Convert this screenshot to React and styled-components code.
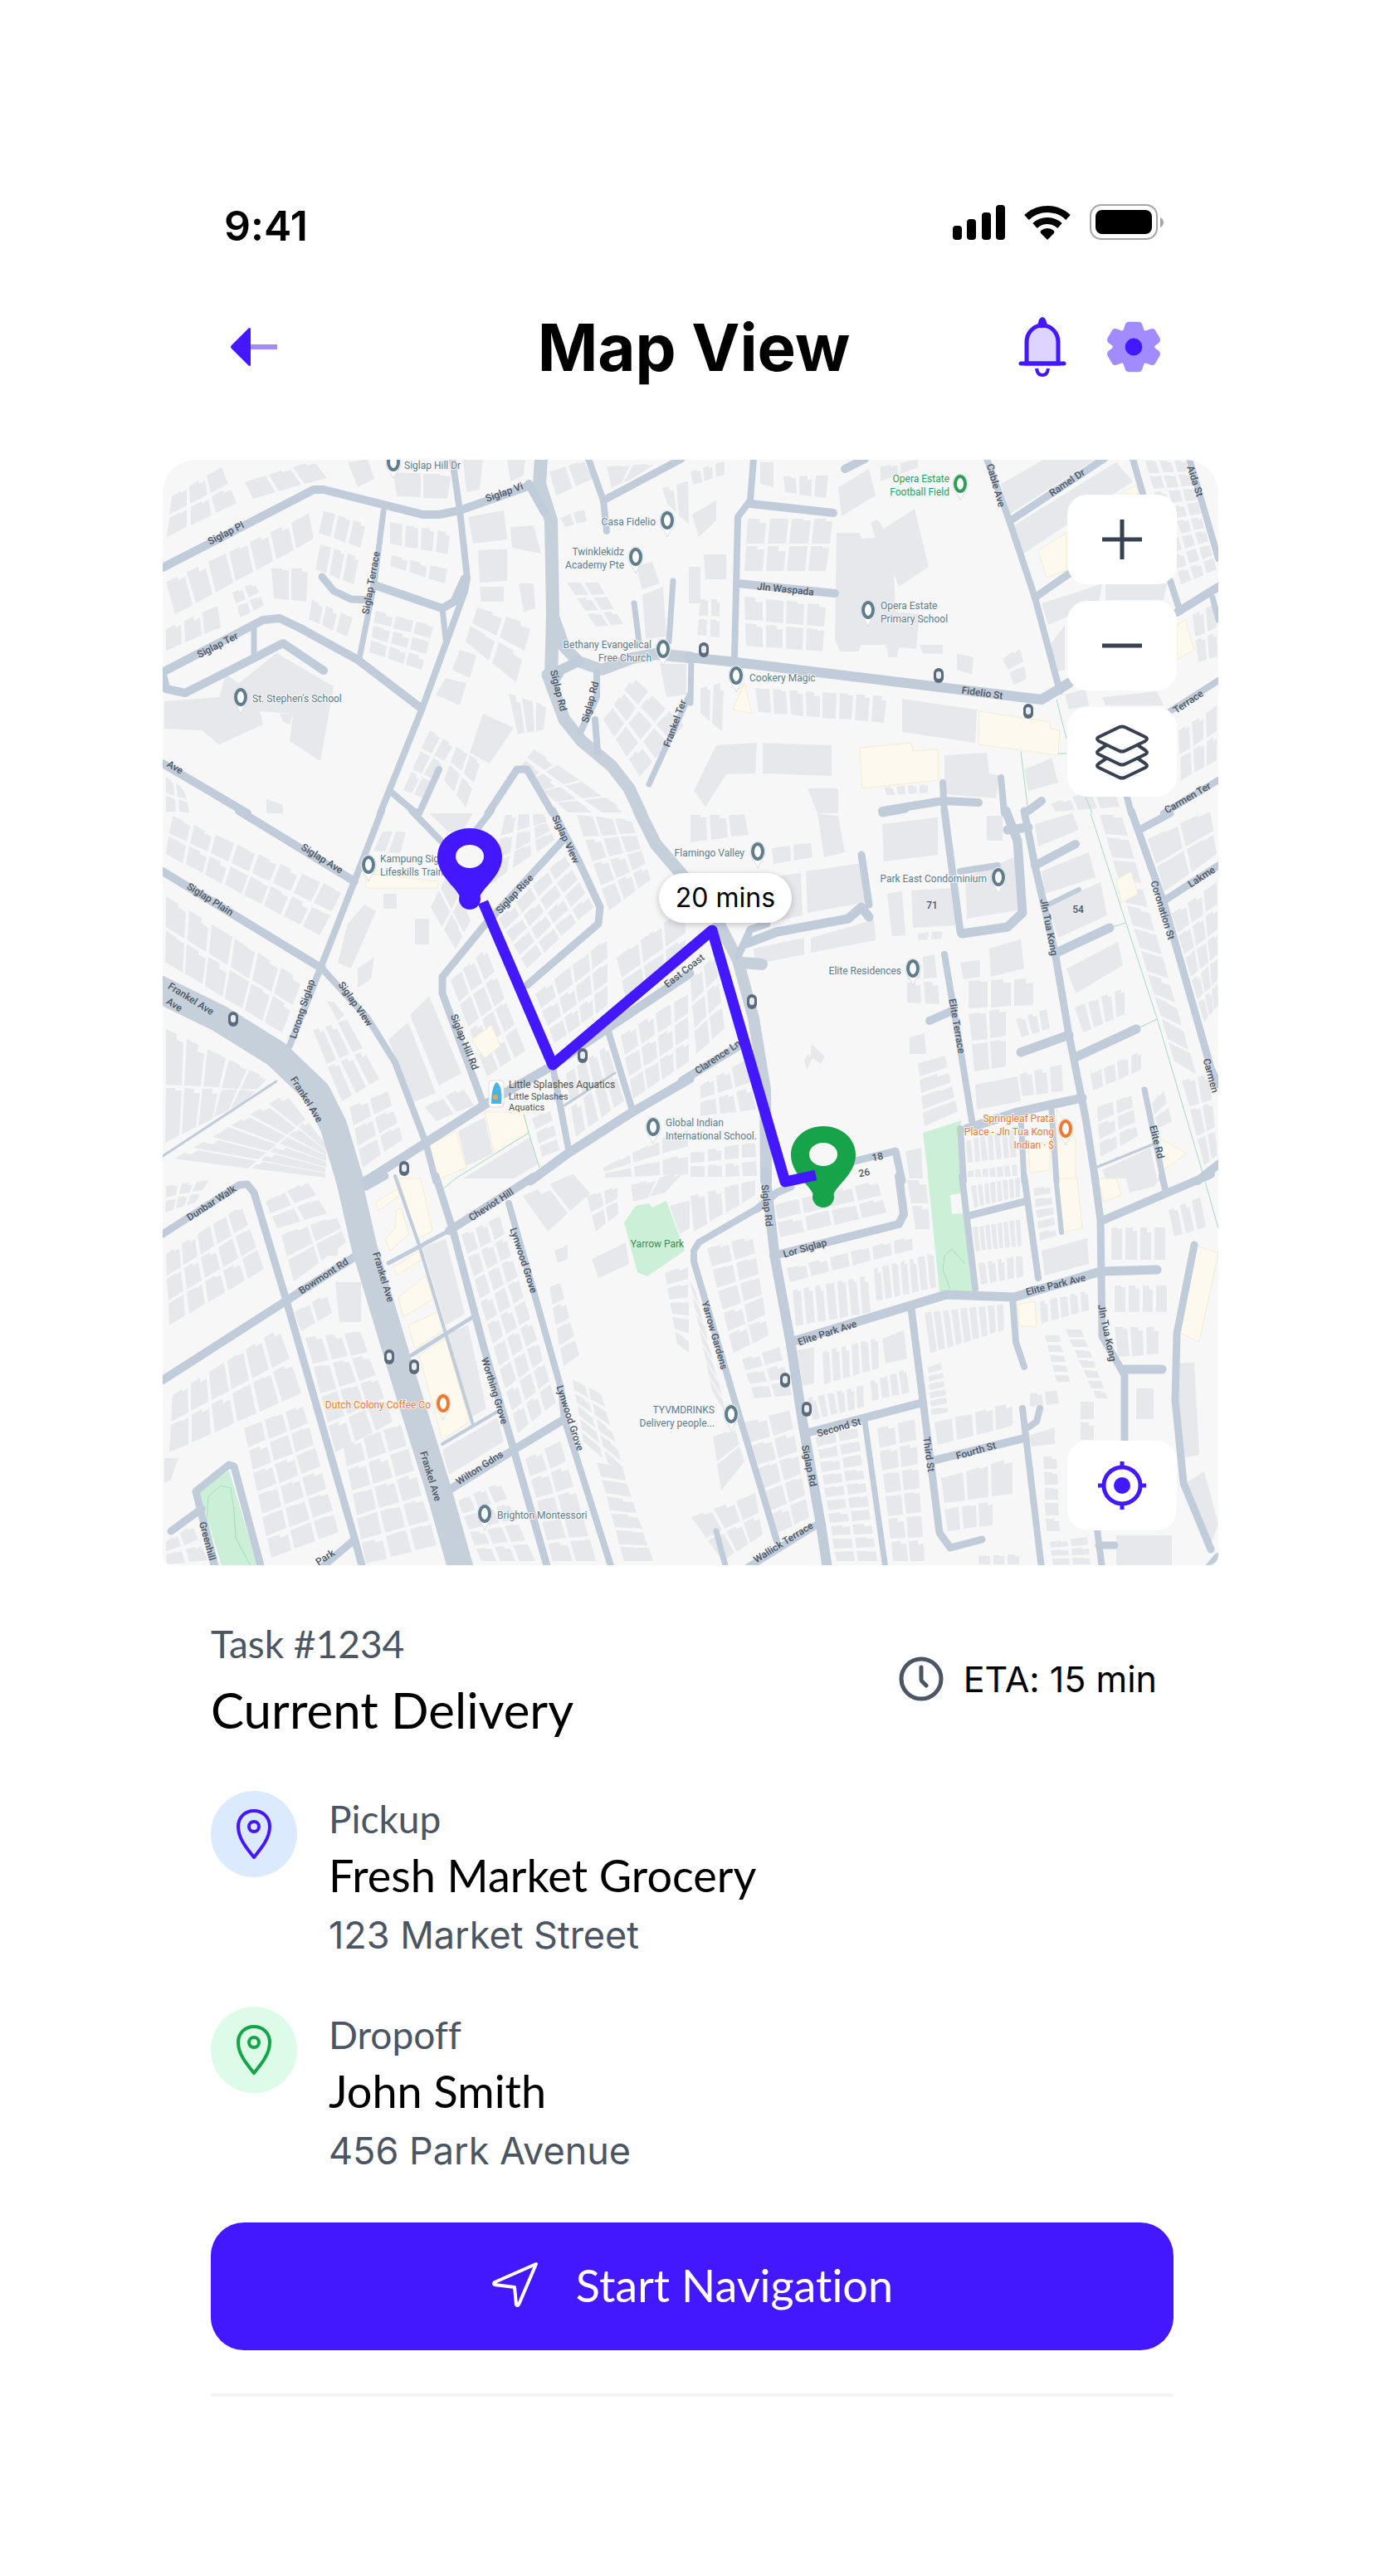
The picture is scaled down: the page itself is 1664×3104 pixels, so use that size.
import React from 'react';
import styled, { createGlobalStyle } from 'styled-components';

const GlobalStyle = createGlobalStyle`
  * {
    box-sizing: border-box;
  }

  body {
    margin: 0;
    background: #ffffff;
    color: #000000;
    font-family: Inter, sans-serif;
    font-variant-ligatures: none;
  }

  h1, h2, p {
    margin: 0;
    font-weight: 400;
  }
`;

const Screen = styled.main`
  width: 100%;
  max-width: 1272px;
  margin: 0 auto;
  padding: 224px 0 216px;
`;

const StatusBar = styled.div`
  display: flex;
  align-items: center;
  justify-content: space-between;
  height: 96px;
  padding: 0 66px 0 74px;
`;

const Time = styled.span`
  font-size: 50px;
  font-weight: 600;
`;

const StatusIcons = styled.div`
  display: flex;
  align-items: center;
  gap: 22px;
  margin-bottom: 8px;
`;

const TopBar = styled.header`
  display: grid;
  grid-template-columns: 1fr auto 1fr;
  align-items: center;
  height: 196px;
  margin-bottom: 38px;
  padding: 0 68px 0 76px;
`;

const Title = styled.h1`
  font-size: 78px;
  font-weight: 700;
`;

const IconButton = styled.button`
  display: flex;
  padding: 0;
  border: 0;
  background: none;
  cursor: pointer;
`;

const Actions = styled.div`
  display: flex;
  align-items: center;
  justify-content: flex-end;
  gap: 44px;
`;

const MapFrame = styled.section`
  position: relative;
  overflow: hidden;
  border-radius: 40px 40px 12px 12px;
  background: #f7f7f7;
`;

const MapCanvas = styled.svg`
  display: block;
  width: 100%;
  height: auto;
  font-family: Roboto, sans-serif;
`;

const Controls = styled.div`
  position: absolute;
  right: 50px;
  top: ${(props) => (props.$bottom ? 'auto' : '42px')};
  bottom: ${(props) => (props.$bottom ? '42px' : 'auto')};
  display: flex;
  flex-direction: column;
  gap: 20px;
`;

const MapButton = styled.button`
  display: flex;
  align-items: center;
  justify-content: center;
  width: 132px;
  height: 108px;
  padding: 0;
  border: 0;
  border-radius: 24px;
  background: #ffffff;
  color: ${(props) => props.$color || '#374151'};
  cursor: pointer;
`;

const TimeBadge = styled.div`
  position: absolute;
  left: 47%;
  top: 37.4%;
  padding: 0 20px;
  border-radius: 30px;
  background: #ffffff;
  box-shadow: 0 2px 8px rgba(0, 0, 0, 0.22);
  font-size: 32px;
  line-height: 60px;
  white-space: nowrap;
`;

const Details = styled.section`
  display: flex;
  flex-direction: column;
  gap: 52px;
  padding: 58px 54px 0 58px;
`;

const TaskRow = styled.div`
  display: flex;
  align-items: center;
  justify-content: space-between;
  margin-bottom: 4px;
  padding-right: 20px;
`;

const TaskNumber = styled.p`
  color: #4b5563;
  font-family: Lato, sans-serif;
  font-size: 46px;
  line-height: 74px;
`;

const TaskTitle = styled.h2`
  font-family: Lato, sans-serif;
  font-size: 60px;
  line-height: 84px;
`;

const Eta = styled.p`
  display: flex;
  align-items: center;
  gap: 24px;
  font-size: 43px;
`;

const Stop = styled.div`
  display: flex;
  gap: 38px;
`;

const StopIcon = styled.div`
  display: flex;
  flex-shrink: 0;
  align-items: center;
  justify-content: center;
  width: 104px;
  height: 104px;
  border-radius: 50%;
  background: ${(props) => props.$background};
`;

const StopText = styled.div`
  padding-top: 4px;
`;

const StopLabel = styled.p`
  color: #4b5563;
  font-family: Lato, sans-serif;
  font-size: 46px;
  line-height: 60px;
`;

const StopName = styled.p`
  font-family: Lato, sans-serif;
  font-size: 54px;
  line-height: 76px;
`;

const StopAddress = styled.p`
  color: #4b5563;
  font-size: 45px;
  line-height: 68px;
`;

const StartButton = styled.button`
  display: flex;
  align-items: center;
  justify-content: center;
  gap: 44px;
  height: 154px;
  padding: 0 0 4px;
  border: 0;
  border-radius: 40px;
  background: #4318ff;
  color: #ffffff;
  font-family: Lato, sans-serif;
  font-size: 54px;
  font-variant-ligatures: none;
  cursor: pointer;
`;

const Divider = styled.hr`
  width: 100%;
  height: 4px;
  margin: 0;
  border: 0;
  border-radius: 4px;
  background: #f3f4f6;
`;

// Map data is stored per tile, in the tile's own units, and projected on the map.
const TILES = [
  {
    origin: [-6, -14],
    roads: [
      [10, '15,432 460,150 490,150 780,240 830,240 890,225 1100,135'],
      [8, '870,40 890,225 912,470 905,520 780,940 655,1320'],
      [7, '665,228 640,490 595,760'],
      [10, '640,495 840,580 875,555 905,470'],
      [7, '840,580 850,690'],
      [9, '485,465 520,515 570,545 625,550'],
      [10, '15,810 310,620 360,615 420,650 590,765 775,940'],
      [10, '15,815 25,870 80,885 285,760 370,705 490,805'],
      [7, '285,650 285,755'],
      [10, '15,1140 265,1320'],
      [8, '690,1245 755,1310 770,1320 830,1160'],
      [9, '975,1320 1060,1160 1090,1160 1165,1320'],
      [16, '1130,40 1125,130 1160,260 1165,600 1160,830'],
      [10, '1095,130 1140,230'],
      [14, '1165,600 1200,720 1240,770 1310,800 1400,760 1470,745 1568,755'],
      [12, '1240,770 1190,800 1165,850'],
      [15, '1150,820 1200,980 1250,1060 1340,1150 1390,1230 1425,1320'],
      [8, '1295,810 1295,900 1245,1030'],
      [8, '1290,980 1298,1100'],
      [8, '1270,40 1315,190 1325,300'],
      [9, '1315,190 1545,40'],
      [7, '1405,560 1420,700'],
      [7, '1520,480 1508,700'],
      [7, '1568,890 1450,1215'],
    ],
    blocks: [
      ['40,170 190,60 240,200 20,330', 3, 2],
      ['250,120 460,40 510,110 280,190', 3, 1],
      ['560,50 620,40 640,110 590,140', 1, 1],
      ['690,80 870,90 860,190 700,180', 2, 1],
      ['900,40 960,40 950,150 910,160', 1, 1],
      ['1030,40 1085,40 1080,100 1040,120', 1, 1],
      ['1150,80 1260,40 1290,110 1170,180', 2, 1],
      ['20,480 450,230 465,330 50,610', 7, 1],
      ['485,220 620,270 600,370 470,310', 3, 1],
      ['475,340 600,390 580,500 460,440', 3, 1],
      ['680,260 870,300 860,390 680,350', 4, 1],
      ['685,380 860,430 850,500 680,430', 3, 1],
      ['915,250 1020,225 1030,330 930,345', 1, 1],
      ['945,370 1030,365 1030,480 950,485', 1, 1],
      ['950,500 1020,500 1020,555 955,555', 1, 1],
      ['1040,285 1110,280 1130,380 1045,360', 1, 1],
      ['1065,490 1110,490 1115,580 1080,590', 1, 1],
      ['330,430 450,430 440,560 340,550', 2, 1],
      ['20,650 180,560 190,650 20,740', 3, 1],
      ['215,520 290,480 320,570 240,620', 2, 2],
      ['450,540 580,610 560,690 440,620', 3, 1],
      ['640,580 820,640 780,810 620,740', 3, 3],
      ['940,570 1110,630 1060,860 900,700', 2, 2],
      ['890,730 940,750 920,830 870,800', 1, 1],
      ['850,830 910,850 890,930 820,890', 1, 1],
      ['1030,880 1150,930 1140,1020 1060,1040', 3, 1],
      ['800,1010 880,1070 780,1270 720,1240', 2, 3],
      ['960,960 1050,1010 980,1140 920,1100', 1, 1],
      ['880,1070 960,1130 910,1310 840,1200', 2, 2],
      ['1110,1080 1400,1320 1200,1320 1060,1160', 4, 2],
      ['1320,60 1480,50 1400,110 1340,150', 2, 1],
      ['1480,140 1568,100 1568,300 1500,200', 2, 1],
      ['1180,250 1260,210 1270,270 1200,290', 2, 1],
      ['1200,480 1300,480 1380,640 1290,650', 2, 3],
      ['1430,530 1490,500 1500,680 1440,690', 1, 1],
      ['1410,430 1460,410 1480,490 1430,510', 1, 1],
      ['1310,980 1400,820 1560,1000 1420,1200', 3, 3],
      ['1480,780 1560,780 1560,890 1500,900', 1, 1],
      ['360,960 400,960 390,1000 370,990', 1, 1],
      ['20,1180 80,1230 100,1320 20,1320', 2, 2],
      ['320,1270 370,1290 370,1320 320,1320', 1, 1],
    ],
    buildings: [
      '20,915 180,900 200,820 240,850 350,740 520,860 480,1130 390,1060 400,960 300,950 310,1000 180,1070 130,1020 20,1015',
    ],
    shops: [],
    parks: [],
    trails: [],
    pois: [
      [695, 50, 'grey', 'start', 728, 76, ['Siglap Hill Dr']],
      [1503, 262, 'grey', 'end', 1468, 280, ['Casa Fidelio']],
      [1410, 392, 'grey', 'end', 1375, 388, ['Twinklekidz', 'Academy Pte']],
      [1492, 725, 'grey', 'end', 1456, 724, ['Bethany Evangelical', 'Free Church']],
      [245, 900, 'grey', 'start', 280, 918, ["St. Stephen's School"]],
    ],
    streets: [
      ['Siglap Pl', 205, 318, -27],
      ['Siglap Vi', 1025, 172, -20],
      ['Siglap Ter', 180, 722, -27],
      ['Siglap Terrace', 640, 490, -80],
      ['Siglap Rd', 1172, 880, 76],
      ['Siglap Rd', 1285, 920, -75],
      ['Frankel Ter', 1535, 1000, -70],
      ['Ave', 46, 1165, 30],
    ],
    stops: [],
  },
  {
    origin: [634, -14],
    roads: [
      [8, '190,40 180,190 145,250 135,760'],
      [10, '180,200 425,235'],
      [10, '145,490 430,525'],
      [12, '0,755 140,775 1040,910 1120,850'],
      [7, '8,760 5,920'],
      [10, '460,75 520,40'],
      [8, '880,40 945,260 1020,540 1095,880'],
      [9, '950,260 1225,40'],
      [8, '1310,40 1340,165'],
      [9, '1020,540 1125,450'],
      [8, '1475,40 1563,400'],
      [8, '1420,480 1450,590'],
      [10, '1440,595 1563,500'],
      [7, '1545,540 1563,620'],
      [8, '1563,840 1420,950'],
      [8, '1400,1320 1563,1200'],
      [10, '570,1310 750,1275 855,1280'],
      [8, '750,1210 755,1320'],
      [8, '920,1190 930,1320'],
      [8, '1290,1250 1305,1320'],
      [10, '1000,1310 1040,1275'],
    ],
    blocks: [
      ['0,80 110,40 110,100 10,140', 3, 1],
      ['10,240 80,190 80,260 30,320', 1, 1],
      ['45,385 110,385 110,475 50,475', 1, 1],
      ['0,430 35,430 35,560 0,560', 1, 1],
      ['30,540 95,540 95,690 20,680', 2, 2],
      ['210,50 250,50 250,140 210,130', 1, 1],
      ['275,95 415,90 410,190 280,165', 3, 1],
      ['560,60 680,40 680,70 560,130', 2, 1],
      ['440,140 530,75 550,170 450,245', 1, 1],
      ['170,250 430,250 410,450 160,450', 4, 2],
      ['160,530 410,560 400,740 165,720', 4, 2],
      ['920,130 1050,40 1200,40 945,240', 1, 1],
      ['960,280 1260,50 1310,120 985,385', 1, 1],
      ['1060,720 1110,640 1110,800 1080,810', 1, 1],
      ['1040,560 1220,490 1210,560 1060,640', 1, 1],
      ['1230,490 1410,490 1400,550 1230,550', 1, 1],
      ['790,745 840,755 835,820 790,800', 1, 1],
      ['680,710 750,710 750,745 690,740', 1, 1],
      ['920,760 980,710 1000,840 960,860', 1, 2],
      ['30,860 110,830 100,1040 30,960', 2, 1],
      ['190,860 590,890 580,1000 200,960', 8, 1],
      ['630,905 850,945 845,1065 628,1025', 1, 1],
      ['218,1065 420,1075 420,1185 218,1175', 1, 1],
      ['1110,890 1170,870 1180,930 1120,945', 1, 1],
      ['1220,900 1380,880 1400,930 1230,930', 1, 1],
      ['1340,40 1470,40 1563,440 1450,500', 3, 8],
      ['1480,600 1563,550 1563,760 1500,780', 2, 2],
      ['1440,1020 1563,920 1563,1130 1450,1210', 3, 2],
      ['990,1160 1070,1120 1090,1210 1000,1240', 1, 1],
      ['1060,1280 1250,1200 1280,1310 1080,1320', 3, 1],
      ['350,1230 440,1230 440,1320 380,1320', 1, 1],
      ['570,1220 710,1210 710,1250 580,1260', 4, 1],
    ],
    buildings: [
      '435,305 505,305 510,328 550,325 535,270 555,258 575,290 665,220 708,430 620,500 605,450 610,590 680,600 670,725 620,720 615,755 590,755 580,710 510,710 500,735 445,735 430,690',
      '80,1075 200,1065 195,1175 110,1180 50,1295 15,1240',
      '755,1110 880,1100 885,1175 915,1185 905,1265 755,1250',
    ],
    shops: [
      '858,950 1065,990 1068,1015 1095,1020 1090,1110 855,1070',
      '505,1082 655,1065 662,1095 735,1090 738,1200 512,1230',
      '1030,370 1115,305 1115,440 1055,468',
      '1270,165 1320,135 1330,165',
      '1440,640 1465,620 1490,730 1440,765',
      '165,850 185,960 130,945',
    ],
    parks: [],
    trails: ['1085,910 1115,1050', '980,1095 1000,1320', '1090,1105 1115,1105', '1170,1260 1190,1320'],
    pois: [
      [801, 130, 'green', 'end', 768, 124, ['Opera Estate', 'Football Field']],
      [529, 585, 'grey', 'start', 565, 582, ['Opera Estate', 'Primary School']],
      [140, 822, 'grey', 'start', 178, 842, ['Cookery Magic']],
    ],
    streets: [
      ['Jln Waspada', 285, 522, 6],
      ['Fidelio St', 865, 897, 8],
      ['Cable Ave', 897, 138, 74],
      ['Aida St', 1484, 124, 72],
      ['Ramel Dr', 1120, 136, -34],
      ['Terrace', 1478, 926, -34],
      ['Carmen Ter', 1476, 1275, -30],
    ],
    stops: [[43, 728], [738, 822], [1000, 952]],
  },
  {
    origin: [-6, 426],
    roads: [
      [10, '240,-10 580,245'],
      [8, '660,-10 580,245 480,560 390,840'],
      [10, '15,210 485,560'],
      [8, '485,560 620,740 700,900 790,1190 820,1330'],
      [33, '-20,620 180,740 350,870 470,1010 520,1130 570,1340'],
      [3, '15,1240 350,970'],
      [8, '750,-10 835,100'],
      [8, '985,-10 940,60'],
      [9, '1195,100 960,410 840,590 840,650 960,1050'],
      [9, '1165,-10 1240,170 1305,340 1300,400 1090,620'],
      [11, '615,1330 790,1190 970,1050 1160,915 1350,760 1568,580'],
      [11, '1100,1330 1210,1230 1400,1080 1568,960'],
      [8, '1165,915 1215,1230'],
      [8, '1330,790 1400,1075'],
      [15, '1420,-10 1470,110 1560,240 1600,320'],
      [3, '1200,1055 1350,940'],
    ],
    blocks: [
      ['40,0 550,280 480,450 20,150', 8, 2],
      ['20,290 430,600 370,800 20,540', 6, 2],
      ['20,770 330,960 260,1040 20,1200', 5, 2],
      ['40,1250 380,1010 500,1200 500,1320 60,1320', 6, 2],
      ['660,60 740,60 720,150 630,140', 2, 1],
      ['800,0 930,0 900,60 860,70', 1, 1],
      ['1020,0 1140,0 1180,90 970,270', 3, 3],
      ['1230,0 1400,20 1460,240 1330,360', 3, 4],
      ['1000,380 1200,140 1290,340 1090,570', 4, 4],
      ['860,200 930,380 880,500 800,340', 2, 2],
      ['760,380 800,380 800,475 760,475', 1, 1],
      ['665,290 705,290 705,345 665,345', 1, 1],
      ['860,600 970,480 1090,860 970,960', 3, 4],
      ['1110,650 1330,440 1330,700 1170,840', 4, 3],
      ['1350,520 1560,330 1560,540 1380,690', 3, 2],
      ['745,730 800,660 895,940 830,985', 1, 1],
      ['680,820 740,755 820,1010 755,1045', 1, 1],
      ['780,1060 900,980 940,1060 820,1120', 2, 1],
      ['450,780 560,740 660,960 540,1050', 3, 2],
      ['560,1060 680,1000 730,1180 600,1290', 2, 3],
      ['590,560 640,520 630,600 590,630', 1, 1],
      ['500,680 520,680 550,730 530,750', 1, 1],
      ['1200,940 1330,830 1380,1040 1230,1180', 4, 2],
      ['1360,800 1568,640 1568,900 1400,1040', 4, 3],
      ['1100,1100 1160,1060 1190,1220 1130,1250', 1, 3],
      ['1310,1280 1568,1110 1568,1320 1320,1320', 3, 2],
      ['900,1320 1100,1170 1120,1270 1050,1320', 1, 1],
      ['885,1150 965,1100 990,1230 910,1275', 1, 1],
    ],
    buildings: ['560,400 610,330 645,355 570,560 530,540'],
    shops: [
      '925,820 985,765 1010,840 965,885',
      '800,1200 880,1150 910,1280 835,1320 820,1320',
      '965,1080 1080,1080 1095,1155 995,1230',
      '615,215 825,245 825,270 615,270',
    ],
    parks: [],
    trails: ['880,1320 1095,1155 1125,1280', '1080,1090 1095,1155'],
    pois: [
      [621, 185, 'grey', 'start', 657, 178, ['Kampung Siglap', 'Lifeskills Training']],
      [1461, 1135, 'grey', 'start', 1497, 1130, ['Global Indian', 'International School.']],
    ],
    streets: [
      ['Siglap Ave', 480, 175, 32],
      ['Siglap Plain', 150, 320, 32],
      ['Siglap View', 1195, 100, 65],
      ['Siglap Rise', 1060, 300, -47],
      ['Siglap View', 575, 695, 55],
      ['Lorong Siglap', 435, 710, -72],
      ['Siglap Hill Rd', 895, 830, 68],
      ['Frankel Ave', 92, 680, 32],
      ['Ave', 44, 702, 32],
      ['Frankel Ave', 430, 1040, 58],
      ['East Coast', 1560, 580, -38],
    ],
    stops: [[222, 745], [1254, 875], [726, 1285]],
  },
  {
    origin: [634, 426],
    roads: [
      [14, '60,330 145,530 190,740 225,1000 228,1330'],
      [9, '145,520 180,420 230,400'],
      [11, '170,470 260,430 470,380 510,340 530,375'],
      [14, '160,540 215,545'],
      [9, '510,150 530,330'],
      [9, '755,-10 800,430'],
      [11, '805,435 940,410 985,360 970,100 935,-10'],
      [9, '990,-10 1020,190 1080,500 1120,800 1170,1100 1200,1330'],
      [11, '940,60 1000,50'],
      [8, '800,210 910,190'],
      [10, '1020,190 1140,110'],
      [11, '1090,500 1240,415'],
      [11, '1145,880 1320,780'],
      [11, '980,865 1120,800'],
      [8, '755,510 800,850 835,1110'],
      [10, '710,750 775,715'],
      [11, '820,1140 970,1080 1160,1030'],
      [8, '800,1140 810,1330'],
      [7, '980,1100 990,1330'],
      [7, '1070,1075 1085,1330'],
      [9, '1305,-10 1400,320 1540,920 1563,980'],
      [9, '1330,60 1420,0'],
      [9, '1395,320 1563,190'],
      [7, '1345,1000 1400,1330'],
      [3, '1200,1280 1380,1190'],
      [10, '-20,965 150,840'],
      [9, '480,1260 610,1220 630,1330'],
      [10, '1500,1330 1563,1270'],
      [9, '570,0 640,-15'],
      [6, '1060,330 1150,275'],
    ],
    blocks: [
      ['0,0 170,0 180,80 0,110', 3, 1],
      ['380,0 440,10 460,140 400,160', 1, 1],
      ['240,120 365,100 370,165 245,190', 2, 1],
      ['570,40 735,15 735,150 575,175', 1, 1],
      ['880,10 925,10 925,100 880,100', 1, 1],
      ['240,230 330,215 335,370 260,390', 1, 1],
      ['345,210 510,180 525,320 350,360', 1, 1],
      ['190,490 340,450 340,510 195,545', 1, 1],
      ['360,450 545,385 550,460 360,505', 1, 1],
      ['585,290 630,280 640,440 600,445', 1, 1],
      ['655,280 785,270 785,405 660,415', 1, 1],
      ['670,430 755,420 750,460 670,465', 2, 1],
      ['815,230 960,160 970,350 820,380', 1, 1],
      ['640,525 730,500 745,700 640,690', 2, 2],
      ['800,540 860,530 860,590 810,600', 1, 1],
      ['885,490 980,455 990,560 890,590', 1, 1],
      ['820,600 1020,590 1020,700 820,710', 3, 1],
      ['820,720 940,700 940,920 840,940', 2, 2],
      ['960,740 1060,700 1070,780 980,820', 3, 1],
      ['1020,40 1130,0 1150,60 1030,120', 1, 1],
      ['1040,210 1180,140 1200,230 1050,290', 1, 1],
      ['1060,330 1215,250 1235,370 1090,450', 1, 1],
      ['1115,560 1265,465 1280,550 1140,650', 1, 1],
      ['1130,700 1290,620 1290,730 1160,800', 4, 1],
      ['1205,0 1280,0 1500,950 1430,900', 1, 11],
      ['1350,90 1540,-20 1563,150 1400,290', 2, 2],
      ['1420,360 1563,240 1563,700 1520,760', 3, 5],
      ['1450,960 1540,940 1563,1240 1520,1280', 2, 3],
      ['650,810 695,795 700,870 650,870', 1, 1],
      ['670,900 760,870 800,1080 690,1140', 1, 4],
      ['845,980 970,950 980,1040 850,1070', 1, 1],
      ['970,940 1105,900 1110,1010 980,1030', 3, 1],
      ['1180,940 1340,850 1340,930 1190,1010', 4, 1],
      ['1200,1060 1310,1010 1330,1170 1210,1250', 2, 3],
      ['1360,1050 1400,980 1430,1120 1380,1150', 1, 2],
      ['1220,1290 1360,1210 1380,1320 1230,1320', 1, 1],
      ['0,600 80,500 110,780 20,880', 2, 3],
      ['30,980 170,880 205,1080 30,1100', 3, 2],
      ['0,1220 200,1180 205,1320 0,1320', 4, 2],
      ['815,1180 960,1130 970,1250 820,1270', 7, 1],
      ['820,1290 970,1260 975,1320 820,1320', 7, 1],
      ['640,1220 685,1210 690,1320 650,1320', 1, 1],
    ],
    buildings: ['340,890 352,870 358,885 362,835 402,880 390,905 365,885 348,928'],
    shops: [
      '1260,240 1305,210 1325,290 1275,325',
      '1000,1190 1065,1190 1065,1290 1005,1300',
      '1085,1070 1140,1180 1140,1330 1090,1330',
      '1390,1175 1470,1230 1400,1290',
    ],
    parks: ['690,1155 805,1110 790,1160 800,1330 708,1330'],
    trails: ['1185,0 1290,400 1380,740 1515,1300', '1240,415 1290,395', '1320,780 1380,745'],
    pois: [
      [202, 138, 'grey', 'end', 165, 155, ['Flamingo Valley']],
      [913, 230, 'grey', 'end', 878, 250, ['Park East Condominium']],
      [661, 560, 'grey', 'end', 626, 582, ['Elite Residences']],
      [1111, 1140, 'orange', 'end', 1078, 1115, ['Springleaf Prata', 'Place - Jln Tua Kong', 'Indian · $']],
    ],
    streets: [
      ['Jln Tua Kong', 1052, 415, 79],
      ['Coronation St', 1388, 355, 73],
      ['Elite Terrace', 782, 770, 80],
      ['Clarence Ln', 90, 890, -34],
      ['Lakme', 1518, 240, -33],
      ['Elite Rd', 1372, 1190, 76],
      ['Carmen', 1530, 950, 75],
      ['71', 718, 345, 0],
      ['54', 1148, 360, 0],
      ['18', 558, 1255, -10],
      ['26', 520, 1310, -10],
    ],
    stops: [[187, 680]],
  },
  {
    origin: [-6, 866],
    roads: [
      [9, '15,200 240,25 265,20 285,50 380,440 580,1300 605,1410'],
      [10, '15,730 590,275'],
      [31, '556,-40 610,250 720,700 830,1130 895,1420'],
      [9, '615,30 670,-10'],
      [4, '700,-10 770,240 850,560 930,890'],
      [5, '680,305 860,190'],
      [10, '860,190 1110,-5'],
      [9, '820,-10 870,180 960,600 1050,980 1150,1410'],
      [5, '750,640 925,505'],
      [4, '840,960 1005,840'],
      [8, '1035,90 1190,760 1200,870 1340,1410'],
      [10, '870,1120 1050,980 1200,870'],
      [9, '170,1410 112,1130 210,1035 225,1040 305,1410'],
      [9, '40,1275 130,1195'],
      [9, '480,1410 575,1310'],
    ],
    blocks: [
      ['20,20 160,0 110,90 20,130', 3, 2],
      ['310,80 440,0 510,130 350,190', 2, 2],
      ['360,200 530,130 560,230 400,380', 2, 2],
      ['20,270 250,90 320,330 30,540', 5, 3],
      ['400,480 500,410 520,490 420,560', 2, 1],
      ['525,375 600,375 600,518 535,518', 1, 1],
      ['500,235 530,235 530,280 495,280', 1, 1],
      ['40,780 360,530 430,780 30,1000', 6, 2],
      ['250,900 430,810 540,1280 330,1380', 3, 6],
      ['20,1010 60,1010 40,1090 20,1100', 1, 1],
      ['20,1310 100,1240 160,1390 20,1400', 2, 2],
      ['430,570 600,550 700,880 520,1000', 3, 4],
      ['540,960 720,880 830,1330 610,1400', 3, 5],
      ['890,200 1010,130 1180,810 1060,930', 3, 9],
      ['1150,390 1190,370 1250,640 1190,690', 1, 4],
      ['1070,60 1230,-20 1280,50 1150,200', 2, 1],
      ['1260,60 1360,20 1360,130 1290,200', 2, 2],
      ['1280,290 1380,230 1390,310 1300,360', 1, 1],
      ['1170,260 1210,240 1210,290 1180,305', 1, 1],
      ['1220,720 1310,770 1390,1100 1250,950', 2, 5],
      ['1290,1020 1370,1040 1470,1390 1370,1390', 1, 6],
      ['880,1160 1010,1090 1120,1390 950,1390', 3, 4],
      ['1080,1010 1190,940 1300,1390 1160,1390', 2, 5],
      ['1490,340 1568,300 1568,640 1530,600', 1, 5],
      ['780,250 850,220 905,490 850,530', 1, 1],
      ['855,560 915,530 970,830 925,865', 1, 1],
      ['840,980 1000,865 1020,950 860,1070', 1, 1],
      ['1390,20 1568,-40 1490,60 1400,90', 2, 1],
      ['1510,100 1568,80 1568,180 1540,200', 1, 1],
    ],
    buildings: [],
    shops: [
      '645,85 705,40 715,60 650,118',
      '670,220 700,180 705,110 720,110 742,200 685,260',
      '710,0 775,0 810,190 765,220',
      '695,320 770,265 780,290 705,350',
      '710,430 790,350 812,435 725,500',
      '740,530 830,480 845,550 760,615',
      '770,640 850,580 920,880 840,945',
    ],
    parks: [
      '122,1132 210,1055 295,1410 190,1410',
      '1375,160 1410,100 1450,90 1460,105 1500,80 1555,260 1445,355 1415,340',
    ],
    trails: ['880,0 840,38', '180,1410 145,1230 150,1150 185,1110 215,1120 225,1200 230,1300 275,1400'],
    pois: [
      [842, 812, 'orange', 'end', 806, 832, ['Dutch Colony Coffee Co']],
      [965, 1212, 'grey', 'start', 1000, 1230, ['Brighton Montessori']],
    ],
    streets: [
      ['Dunbar Walk', 165, 100, -33],
      ['Frankel Ave', 655, 360, 73],
      ['Frankel Ave', 795, 1080, 73],
      ['Bowmont Rd', 495, 362, -33],
      ['Cheviot Hill', 990, 105, -33],
      ['Lynwood Grove', 1070, 300, 72],
      ['Lynwood Grove', 1208, 870, 72],
      ['Worthing Grove', 985, 770, 73],
      ['Wilton Gdns', 955, 1055, -33],
      ['Greenhill', 138, 1315, 75],
      ['Park', 500, 1380, -33],
    ],
    stops: [[682, 645], [756, 680]],
  },
  {
    origin: [634, 866],
    roads: [
      [12, '225,-20 255,290 300,600 335,880 390,1250 410,1410'],
      [8, '215,100 30,230 15,260 15,300 130,780 260,1310'],
      [9, '200,110 260,50 300,30'],
      [10, '250,280 620,165 635,130 620,-10'],
      [11, '300,590 760,420 960,430 1215,335 1380,330'],
      [10, '345,920 690,810'],
      [9, '655,470 690,800 740,1280 770,1335 865,1305'],
      [7, '520,880 580,1410'],
      [10, '720,1020 990,940'],
      [8, '985,830 1040,1410'],
      [8, '1000,900 1025,880 1035,830'],
      [8, '955,430 965,590 990,680'],
      [8, '805,-10 845,400'],
      [9, '825,135 990,85'],
      [8, '990,-10 1030,360'],
      [6, '1083,-10 1100,195'],
      [9, '1198,-10 1215,150 1220,570 1285,710 1285,960'],
      [8, '1205,1270 1218,1410'],
      [11, '1285,690 1395,690'],
      [10, '1225,150 1540,-15'],
      [8, '1395,-10 1405,40'],
      [9, '1490,240 1440,560 1435,800 1460,1100 1540,1340'],
      [12, '1535,1410 1563,1370'],
      [7, '80,1275 110,1410'],
      [9, '170,1410 375,1255'],
      [9, '1210,1325 1255,1325'],
    ],
    blocks: [
      ['0,60 200,0 200,60 10,200', 4, 1],
      ['50,250 190,200 240,570 130,640', 2, 5],
      ['0,360 20,400 120,880 60,760', 1, 7],
      ['150,650 270,600 310,790 190,800', 2, 3],
      ['250,90 560,0 590,130 265,220', 4, 2],
      ['640,0 705,0 715,190 665,190', 1, 2],
      ['285,320 660,200 665,260 295,380', 6, 1],
      ['300,400 530,345 540,490 310,540', 7, 1],
      ['540,320 725,265 735,400 550,450', 7, 1],
      ['320,620 370,610 370,740 335,750', 1, 1],
      ['390,620 560,570 565,690 395,750', 6, 1],
      ['570,580 635,550 645,650 580,670', 1, 1],
      ['345,790 520,740 520,830 365,880', 6, 1],
      ['530,730 645,680 655,780 535,810', 4, 1],
      ['370,930 500,890 560,1390 430,1390', 2, 10],
      ['550,900 670,860 700,1390 600,1390', 2, 6],
      ['160,880 300,830 360,1230 260,1290', 2, 5],
      ['65,930 140,900 170,1020 90,1140', 1, 2],
      ['0,1220 200,1130 220,1290 100,1390', 3, 2],
      ['690,480 930,450 935,550 710,640', 9, 1],
      ['700,680 750,660 770,850 710,860', 1, 6],
      ['720,880 960,800 960,900 730,970', 4, 1],
      ['740,1080 960,1000 960,1150 750,1180', 3, 1],
      ['750,1190 900,1160 900,1260 760,1280', 3, 1],
      ['1000,770 1090,760 1100,820 1000,830', 2, 1],
      ['1000,930 1080,900 1080,960 1010,970', 1, 1],
      ['830,20 980,-10 980,70 840,110', 8, 1],
      ['835,170 980,140 985,250 845,270', 8, 1],
      ['850,300 990,270 990,360 860,390', 5, 1],
      ['1010,30 1070,20 1090,210 1030,230', 1, 5],
      ['1040,260 1175,215 1180,310 1050,350', 1, 1],
      ['1030,440 1180,400 1185,480 1035,530', 5, 1],
      ['1045,560 1095,560 1130,740 1080,740', 1, 5],
      ['1105,540 1160,540 1240,800 1200,800', 1, 7],
      ['1240,170 1410,170 1410,300 1240,300', 4, 1],
      ['1250,380 1415,380 1415,490 1250,490', 4, 1],
      ['1250,530 1390,530 1390,640 1260,650', 3, 1],
      ['1410,110 1510,60 1530,180 1430,220', 3, 1],
      ['1320,760 1370,760 1370,870 1320,870', 1, 1],
      ['1150,800 1200,800 1200,950 1150,950', 1, 2],
      ['1440,670 1490,665 1505,1000 1455,1010', 1, 1],
      ['1465,1100 1520,1060 1563,1250 1540,1320', 1, 1],
      ['1260,1290 1425,1290 1425,1400 1260,1400', 1, 1],
      ['1040,1000 1090,1000 1100,1280 1050,1280', 1, 5],
      ['1060,1310 1180,1290 1190,1400 1070,1400', 2, 3],
      ['850,1360 980,1350 980,1400 850,1400', 3, 1],
      ['1290,0 1390,0 1370,30 1300,50', 1, 1],
    ],
    buildings: [],
    shops: [
      '1090,0 1145,0 1160,180 1105,195',
      '1208,0 1260,0 1275,60 1225,85',
      '970,455 1020,445 1025,535 975,535',
      '1490,240 1563,270 1505,590 1435,550',
    ],
    parks: ['705,-10 800,-10 800,55 770,60 775,130 815,125 835,408 740,410'],
    trails: ['1520,0 1563,180', '770,400 750,330 755,280 775,255 815,310'],
    pois: [
      [125, 852, 'grey', 'end', 75, 848, ['TYVMDRINKS', 'Delivery people...']],
    ],
    streets: [
      ['Siglap Rd', 220, 100, 84],
      ['Siglap Rd', 345, 1040, 78],
      ['Lor Siglap', 345, 264, -16],
      ['Yarrow Gardens', 65, 570, 74],
      ['Elite Park Ave', 412, 570, -18],
      ['Elite Park Ave', 1085, 397, -14],
      ['Second St', 445, 912, -16],
      ['Third St', 698, 1000, 82],
      ['Fourth St', 850, 995, -16],
      ['Jln Tua Kong', 1225, 560, 78],
      ['Wallick Terrace', 285, 1325, -32],
    ],
    stops: [[285, 728], [347, 835]],
  },
];

const POI_COLORS = { grey: '#5f7d8c', green: '#2f9e5b', orange: '#ee7a30' };

const project = (origin, x, y) => [
  Math.round(origin[0] + x * 0.4085),
  Math.round(origin[1] + y / 3),
];

const toPoints = (origin, text) =>
  text.split(' ').map((pair) => {
    const [x, y] = pair.split(',').map(Number);
    return project(origin, x, y);
  });

const toAttr = (points) => points.map((p) => p.join(',')).join(' ');

// Splits a city block into plots, leaving a narrow lane around each one.
const splitBlock = (corners, cols, rows) => {
  const [a, b, c, d] = corners;
  const width = Math.hypot(b[0] - a[0], b[1] - a[1]) / cols;
  const height = Math.hypot(d[0] - a[0], d[1] - a[1]) / rows;
  const single = cols * rows === 1;
  const gapU = single ? 0 : Math.min(0.14, 2 / width);
  const gapV = single ? 0 : Math.min(0.14, 2 / height);
  const at = (u, v) =>
    [0, 1].map((k) =>
      Math.round((a[k] * (1 - u) + b[k] * u) * (1 - v) + (d[k] * (1 - u) + c[k] * u) * v)
    );

  const plots = [];
  for (let row = 0; row < rows; row += 1) {
    for (let col = 0; col < cols; col += 1) {
      const notch = single || width < 11 ? 0 : ((row * 7 + col * 5 + a[0]) % 4) * 0.05;
      const u0 = (col + gapU) / cols;
      const u1 = (col + 1 - gapU) / cols;
      const um = (col + 0.6) / cols;
      const v0 = (row + gapV) / rows;
      const v1 = (row + 1 - gapV) / rows;
      const vn = (row + gapV + notch) / rows;
      plots.push([at(u0, v0), at(um, v0), at(um, vn), at(u1, vn), at(u1, v1), at(u0, v1)]);
    }
  }
  return plots;
};

const TileShapes = ({ tile }) => {
  const { origin } = tile;
  return (
    <g>
      <g fill="#e7e8ec">
        {tile.blocks.map(([corners, cols, rows]) =>
          splitBlock(toPoints(origin, corners), cols, rows).map((plot, i) => (
            <polygon key={corners + i} points={toAttr(plot)} />
          ))
        )}
        {tile.buildings.map((shape) => (
          <polygon key={shape} points={toAttr(toPoints(origin, shape))} />
        ))}
      </g>
      <g fill="#fdf9ef" stroke="#f4ecd0">
        {tile.shops.map((shape) => (
          <polygon key={shape} points={toAttr(toPoints(origin, shape))} />
        ))}
      </g>
      <g fill="#ccefd8">
        {tile.parks.map((shape) => (
          <polygon key={shape} points={toAttr(toPoints(origin, shape))} />
        ))}
      </g>
      <g fill="none" stroke="#a5dcc0">
        {tile.trails.map((line) => (
          <polyline key={line} points={toAttr(toPoints(origin, line))} />
        ))}
      </g>
    </g>
  );
};

const TileRoads = ({ tile }) => (
  <g fill="none" strokeLinecap="round" strokeLinejoin="round">
    {tile.roads.map(([width, line]) => (
      <polyline
        key={line}
        points={toAttr(toPoints(tile.origin, line))}
        stroke={width > 12 ? '#c6d0da' : '#c0ccd9'}
        strokeWidth={width}
      />
    ))}
  </g>
);

const TileLabels = ({ tile }) => {
  const { origin } = tile;
  return (
    <g>
      {tile.streets.map(([name, x, y, angle]) => {
        const [px, py] = project(origin, x, y);
        return (
          <text
            key={name + x}
            fill="#4d5766"
            fontSize="12"
            fontWeight="500"
            textAnchor="middle"
            transform={`translate(${px} ${py}) rotate(${angle})`}
          >
            {name}
          </text>
        );
      })}
      {tile.stops.map(([x, y]) => {
        const [px, py] = project(origin, x, y);
        return (
          <g key={x}>
            <rect x={px - 6} y={py - 9} width="12" height="18" rx="6" fill="#5b6b7b" />
            <rect x={px - 3} y={py - 5} width="6" height="9" rx="3" fill="#e9edf1" />
          </g>
        );
      })}
      {tile.pois.map(([x, y, tone, anchor, tx, ty, lines]) => {
        const [px, py] = project(origin, x, y);
        const [lx, ly] = project(origin, tx, ty);
        return (
          <g key={lines[0]}>
            <path
              d={`M${px - 9} ${py}a9 12 0 0 1 18 0c0 8-6 12-9 20c-3-8-9-12-9-20z`}
              fill="#ffffff"
              stroke="#d9dde2"
            />
            <ellipse cx={px} cy={py} rx="6" ry="9" fill="#ffffff" stroke={POI_COLORS[tone]} strokeWidth="4" />
            {lines.map((line, i) => (
              <text
                key={line}
                x={lx}
                y={ly + i * 16}
                fill={POI_COLORS[tone]}
                stroke="#f7f7f7"
                strokeWidth="2"
                paintOrder="stroke"
                fontSize="12"
                textAnchor={anchor}
              >
                {line}
              </text>
            ))}
          </g>
        );
      })}
    </g>
  );
};

const MapPin = ({ x, y, color }) => (
  <g transform={`translate(${x} ${y})`} fill={color}>
    <path
      fillRule="evenodd"
      d="M0-34c22 0 39 15 39 35c0 15-11 27-20 37c-4 5-7 9-9 14h-20c-2-5-5-9-9-14c-9-10-20-22-20-37c0-20 17-35 39-35zM0-14a17 14 0 1 0 0 28a17 14 0 1 0 0-28z"
    />
    <circle cy="51" r="13" />
  </g>
);

const CityMap = () => (
  <MapCanvas viewBox="0 0 1272 1332" role="img" aria-label="Delivery route map">
    {TILES.map((tile) => (
      <TileShapes key={tile.origin.join()} tile={tile} />
    ))}
    {TILES.map((tile) => (
      <TileRoads key={tile.origin.join()} tile={tile} />
    ))}
    {TILES.map((tile) => (
      <TileLabels key={tile.origin.join()} tile={tile} />
    ))}
    <text x="596" y="949" fill="#3c8a5c" fontSize="12" textAnchor="middle">
      Yarrow Park
    </text>
    <g fill="#53504a" fontSize="12">
      <rect x="393" y="748" width="18" height="32" rx="4" fill="#ffffff" stroke="#d9dde2" />
      <path d="M396 776q0-20 6-26q8 4 6 26z" fill="#45b5e8" />
      <circle cx="401" cy="768" r="3" fill="#f5a742" />
      <text x="417" y="757">Little Splashes Aquatics</text>
      <text x="417" y="771" fontSize="11">Little Splashes</text>
      <text x="417" y="784" fontSize="11">Aquatics</text>
    </g>
    <MapPin x={370} y={478} color="#4318ff" />
    <MapPin x={796} y={837} color="#16a34a" />
    <polyline
      points="386,533 470,729 662,567 750,870 787,862"
      fill="none"
      stroke="#4318ff"
      strokeWidth="13"
      strokeLinejoin="round"
    />
  </MapCanvas>
);

const SignalIcon = () => (
  <svg width="65" height="42" viewBox="0 0 65 42" aria-hidden="true">
    <rect x="1" y="25" width="11" height="17" rx="4" />
    <rect x="18" y="17" width="11" height="25" rx="4" />
    <rect x="36" y="9" width="11" height="33" rx="4" />
    <rect x="53" y="0" width="11" height="42" rx="4" />
  </svg>
);

const WifiIcon = () => (
  <svg width="56" height="42" viewBox="0 0 56 42" aria-hidden="true">
    <g fill="none" stroke="#000000" strokeWidth="8">
      <path d="M3 15a36 36 0 0 1 50 0" />
      <path d="M13 25a22 22 0 0 1 30 0" />
    </g>
    <path d="M28 42l-8-8a3 3 0 0 1 0-3a12 12 0 0 1 16 0a3 3 0 0 1 0 3z" />
  </svg>
);

const BatteryIcon = () => (
  <svg width="90" height="44" viewBox="0 0 90 44" aria-hidden="true">
    <rect x="2" y="1" width="80" height="41" rx="13" fill="none" stroke="#a6a6a6" strokeWidth="2" />
    <rect x="8" y="7" width="68" height="29" rx="8" />
    <path d="M86 16q4 2 4 6t-4 6z" fill="#a6a6a6" />
  </svg>
);

const BackIcon = () => (
  <svg width="72" height="60" viewBox="0 0 72 60" aria-hidden="true">
    <path d="M30 30h32" stroke="#a18bff" strokeWidth="6" />
    <path d="M30 8v44q-1 2-3 0l-20-20q-2-2 0-4l20-20q2-2 3 0z" fill="#4318ff" />
  </svg>
);

const BellIcon = () => (
  <svg width="64" height="76" viewBox="0 0 64 76" aria-hidden="true">
    <path d="M13 58v-26a19 20 0 0 1 38 0v26z" fill="#ddd5ff" stroke="#4318ff" strokeWidth="5" />
    <path d="M6 58h52" stroke="#4318ff" strokeWidth="5" strokeLinecap="round" />
    <path d="M25 15l3-10q4-6 8 0l3 10z" fill="#4318ff" />
    <path d="M25 64q1 8 7 8t7-8" fill="none" stroke="#4318ff" strokeWidth="4" />
  </svg>
);

const GEAR_PATH =
  'M30 4h12q4 0 5 4l2 6q1 2 3 1l6-2q3-1 5 1l6 10q2 4-1 7l-4 3q-3 2 0 4l4 3q3 3 1 7l-6 10q-2 2-5 1l-6-2q-2-1-3 1l-2 6q-1 4-5 4h-12q-4 0-5-4l-2-6q-1-2-3-1l-6 2q-3 1-5-1l-6-10q-2-4 1-7l4-3q3-2 0-4l-4-3q-3-3-1-7l6-10q2-2 5-1l6 2q2 1 3-1l2-6q1-4 5-4z';

const GearIcon = () => (
  <svg width="68" height="72" viewBox="0 0 72 72" aria-hidden="true">
    <path d={GEAR_PATH} fill="#a18bff" />
    <circle cx="36" cy="36" r="11" fill="#4318ff" />
  </svg>
);

const PlusIcon = () => (
  <svg width="48" height="48" viewBox="0 0 48 48" stroke="currentColor" strokeWidth="5" aria-hidden="true">
    <path d="M0 24h48M24 0v48" />
  </svg>
);

const MinusIcon = () => (
  <svg width="48" height="48" viewBox="0 0 48 48" stroke="currentColor" strokeWidth="5" aria-hidden="true">
    <path d="M0 24h48" />
  </svg>
);

const LayersIcon = () => (
  <svg
    width="68"
    height="68"
    viewBox="0 0 68 68"
    fill="none"
    stroke="currentColor"
    strokeWidth="4"
    strokeLinejoin="round"
    aria-hidden="true"
  >
    <path d="M31 4q3-1 6 0l25 12q4 2 0 5l-25 12q-3 1-6 0l-25-12q-4-3 0-5z" />
    <path d="M15 26l-9 6q-4 3 0 5l25 12q3 1 6 0l25-12q4-2 0-5l-9-6" />
    <path d="M15 42l-9 6q-4 3 0 5l25 12q3 1 6 0l25-12q4-2 0-5l-9-6" />
  </svg>
);

const LocateIcon = () => (
  <svg width="58" height="58" viewBox="0 0 58 58" fill="none" stroke="currentColor" strokeWidth="5" aria-hidden="true">
    <circle cx="29" cy="29" r="22" />
    <circle cx="29" cy="29" r="10" fill="currentColor" stroke="none" />
    <path d="M29 0v9M29 49v9M0 29h9M49 29h9" />
  </svg>
);

const ClockIcon = () => (
  <svg width="54" height="54" viewBox="0 0 54 54" fill="none" stroke="#4b5563" strokeWidth="5" aria-hidden="true">
    <circle cx="27" cy="27" r="24" />
    <path d="M27 13v14q0 2 1 3l5 5" strokeLinecap="round" />
  </svg>
);

const PlaceIcon = ({ color }) => (
  <svg width="46" height="62" viewBox="0 0 46 62" fill="none" stroke={color} strokeWidth="4" aria-hidden="true">
    <path d="M23 3c11 0 19 8 19 19c0 14-10 26-19 37c-9-11-19-23-19-37c0-11 8-19 19-19z" strokeLinejoin="round" />
    <circle cx="23" cy="22" r="6" />
  </svg>
);

const SendIcon = () => (
  <svg width="58" height="56" viewBox="0 0 58 56" fill="none" stroke="#ffffff" strokeWidth="4" aria-hidden="true">
    <path d="M54 3l-50 22q-2 2 0 3l24 3l2 21q1 2 3 0z" strokeLinejoin="round" />
  </svg>
);

const stops = [
  { label: 'Pickup', name: 'Fresh Market Grocery', address: '123 Market Street', color: '#4318ff', background: '#dbeafe' },
  { label: 'Dropoff', name: 'John Smith', address: '456 Park Avenue', color: '#16a34a', background: '#dcfce7' },
];

const App = () => {
  return (
    <>
      <GlobalStyle />
      <Screen>
        <StatusBar>
          <Time>9:41</Time>
          <StatusIcons>
            <SignalIcon />
            <WifiIcon />
            <BatteryIcon />
          </StatusIcons>
        </StatusBar>
        <TopBar>
          <IconButton aria-label="Back">
            <BackIcon />
          </IconButton>
          <Title>Map View</Title>
          <Actions>
            <IconButton aria-label="Notifications">
              <BellIcon />
            </IconButton>
            <IconButton aria-label="Settings">
              <GearIcon />
            </IconButton>
          </Actions>
        </TopBar>
        <MapFrame>
          <CityMap />
          <TimeBadge>20 mins</TimeBadge>
          <Controls>
            <MapButton aria-label="Zoom in">
              <PlusIcon />
            </MapButton>
            <MapButton aria-label="Zoom out">
              <MinusIcon />
            </MapButton>
            <MapButton aria-label="Layers">
              <LayersIcon />
            </MapButton>
          </Controls>
          <Controls $bottom>
            <MapButton aria-label="My location" $color="#4318ff">
              <LocateIcon />
            </MapButton>
          </Controls>
        </MapFrame>
        <Details>
          <TaskRow>
            <div>
              <TaskNumber>Task #1234</TaskNumber>
              <TaskTitle>Current Delivery</TaskTitle>
            </div>
            <Eta>
              <ClockIcon />
              ETA: 15 min
            </Eta>
          </TaskRow>
          {stops.map((stop) => (
            <Stop key={stop.label}>
              <StopIcon $background={stop.background}>
                <PlaceIcon color={stop.color} />
              </StopIcon>
              <StopText>
                <StopLabel>{stop.label}</StopLabel>
                <StopName>{stop.name}</StopName>
                <StopAddress>{stop.address}</StopAddress>
              </StopText>
            </Stop>
          ))}
          <StartButton>
            <SendIcon />
            Start Navigation
          </StartButton>
          <Divider />
        </Details>
      </Screen>
    </>
  );
};

export default App;
